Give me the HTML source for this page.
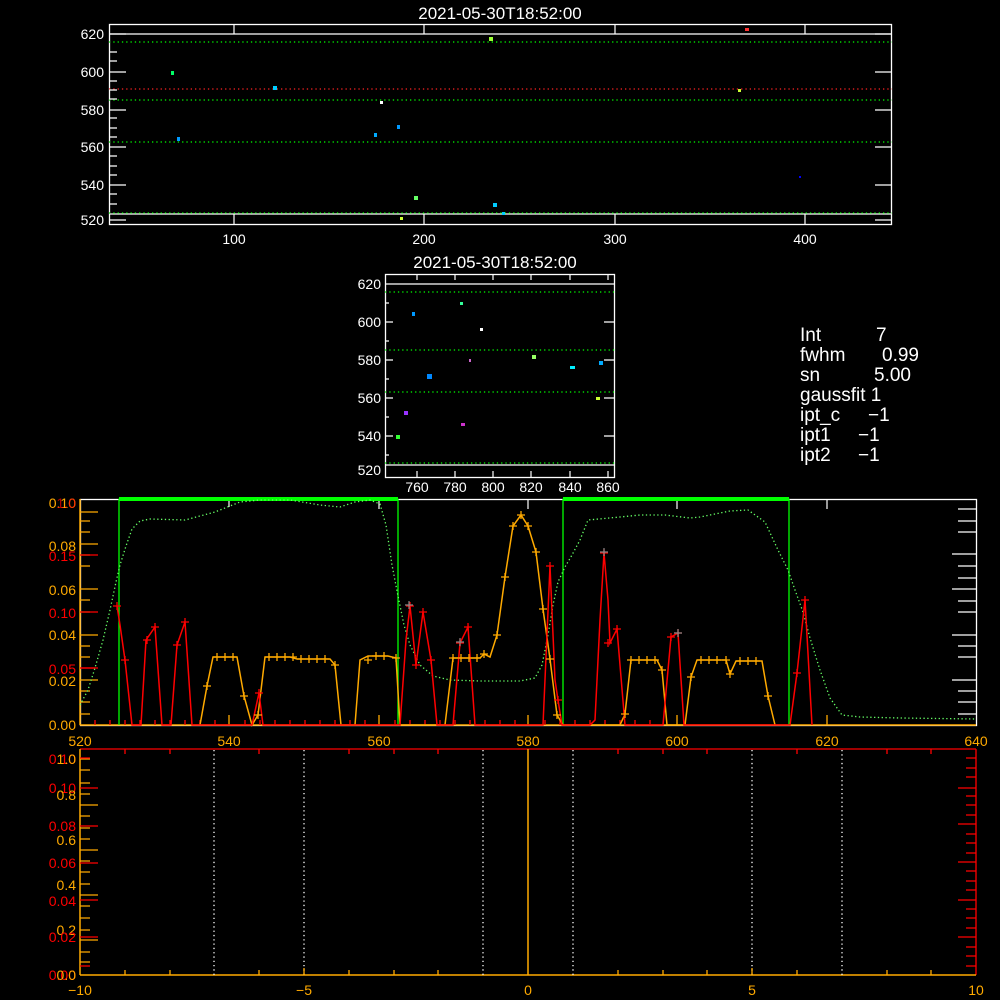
<!DOCTYPE html>
<html><head><meta charset="utf-8"><style>
html,body{margin:0;padding:0;background:#000;}
svg{display:block}
text{font-family:"Liberation Sans",sans-serif;}
</style></head><body>
<svg width="1000" height="1000" viewBox="0 0 1000 1000" xmlns="http://www.w3.org/2000/svg">
<rect width="1000" height="1000" fill="#000"/>

<!-- TOP PANEL -->
<text x="500" y="19" fill="#fff" font-size="17" text-anchor="middle">2021-05-30T18:52:00</text>
<rect x="109.5" y="24.5" width="782" height="200" fill="none" stroke="#fff" stroke-width="1.3"/>
<line x1="109" y1="34" x2="892" y2="34" stroke="#fff" stroke-width="1.3"/>
<line x1="109" y1="214" x2="892" y2="214" stroke="#fff" stroke-width="1.3"/>
<g stroke-dasharray="1.3 3" stroke-width="1.3">
<line x1="109" y1="42" x2="892" y2="42" stroke="#0f0"/>
<line x1="109" y1="89" x2="892" y2="89" stroke="#f22"/>
<line x1="109" y1="100" x2="892" y2="100" stroke="#0f0"/>
<line x1="109" y1="142" x2="892" y2="142" stroke="#0f0"/>
<line x1="109" y1="213" x2="892" y2="213" stroke="#0f0"/>
</g>
<g stroke="#fff" stroke-width="1.2">
<path d="M109 34h17M109 72h17M109 110h17M109 147h17M109 185h17M109 220h17M109 52h8M109 61h8M109 81h8M109 90h8M109 99h8M109 118h8M109 128h8M109 137h8M109 156h8M109 166h8M109 175h8M109 194h8M109 204h8M875 34h17M875 72h17M875 110h17M875 147h17M875 185h17M875 220h17"/>
<path d="M234 224v-10M424 224v-10M615 224v-10M805 224v-10M234 24v10M424 24v10M615 24v10M805 24v10"/>
</g>
<g fill="#fff" font-size="14" text-anchor="end">
<text x="104" y="39">620</text><text x="104" y="77">600</text><text x="104" y="115">580</text><text x="104" y="152">560</text><text x="104" y="190">540</text><text x="104" y="225">520</text>
</g>
<g fill="#fff" font-size="14" text-anchor="middle">
<text x="234" y="244">100</text><text x="424" y="244">200</text><text x="615" y="244">300</text><text x="805" y="244">400</text>
</g>
<g>
<rect x="171" y="71" width="3" height="4" fill="#0f6"/><rect x="177" y="137" width="3" height="4" fill="#09f"/>
<rect x="273" y="86" width="4" height="4" fill="#0cf"/><rect x="380" y="101" width="3" height="3" fill="#fff"/>
<rect x="397" y="125" width="3" height="4" fill="#09f"/><rect x="374" y="133" width="3" height="4" fill="#0af"/>
<rect x="414" y="196" width="4" height="4" fill="#6f6"/><rect x="400" y="217" width="3" height="3" fill="#cf3"/>
<rect x="493" y="203" width="4" height="4" fill="#0cf"/><rect x="489" y="37" width="4" height="4" fill="#9f3"/>
<rect x="745" y="28" width="4" height="3" fill="#f33"/><rect x="738" y="89" width="3" height="3" fill="#cf3"/>
<rect x="799" y="176" width="2" height="2" fill="#00f"/><rect x="502" y="212" width="3" height="3" fill="#0cf"/>
</g>

<!-- MIDDLE PANEL -->
<text x="495" y="268" fill="#fff" font-size="17" text-anchor="middle">2021-05-30T18:52:00</text>
<rect x="385.5" y="274.5" width="229" height="203" fill="none" stroke="#fff" stroke-width="1.3"/>
<line x1="385" y1="284" x2="615" y2="284" stroke="#fff" stroke-width="1.3"/>
<line x1="385" y1="465" x2="615" y2="465" stroke="#fff" stroke-width="1.3"/>
<g stroke="#0f0" stroke-dasharray="1.3 3" stroke-width="1.3">
<line x1="385" y1="292" x2="615" y2="292"/><line x1="385" y1="350" x2="615" y2="350"/><line x1="385" y1="392" x2="615" y2="392"/><line x1="385" y1="463" x2="615" y2="463"/>
</g>
<g stroke="#fff" stroke-width="1.2">
<path d="M385 322h8M385 360h8M385 398h8M385 436h8M385 303h4M385 341h4M385 379h4M385 417h4M385 455h4M604 322h11M604 360h11M604 398h11M604 436h11"/>
<path d="M417 477v-6M455 477v-6M493 477v-6M531 477v-6M570 477v-6M608 477v-6M417 274v6M455 274v6M493 274v6M531 274v6M570 274v6M608 274v6"/>
</g>
<g fill="#fff" font-size="14" text-anchor="end">
<text x="381" y="289">620</text><text x="381" y="327">600</text><text x="381" y="365">580</text><text x="381" y="403">560</text><text x="381" y="441">540</text><text x="381" y="475">520</text>
</g>
<g fill="#fff" font-size="14" text-anchor="middle">
<text x="417" y="492">760</text><text x="455" y="492">780</text><text x="493" y="492">800</text><text x="531" y="492">820</text><text x="570" y="492">840</text><text x="608" y="492">860</text>
</g>
<g>
<rect x="396" y="435" width="4" height="4" fill="#3f3"/><rect x="404" y="411" width="4" height="4" fill="#93f"/>
<rect x="412" y="312" width="3" height="4" fill="#09f"/><rect x="427" y="374" width="5" height="5" fill="#08f"/>
<rect x="460" y="302" width="3" height="3" fill="#3f9"/><rect x="461" y="423" width="4" height="3" fill="#c3c"/>
<rect x="480" y="328" width="3" height="3" fill="#fff"/><rect x="469" y="359" width="2" height="3" fill="#c6c"/>
<rect x="532" y="355" width="4" height="4" fill="#9f6"/><rect x="570" y="366" width="5" height="3" fill="#0ef"/>
<rect x="599" y="361" width="4" height="4" fill="#0af"/><rect x="596" y="397" width="4" height="3" fill="#cf3"/>
</g>

<!-- TEXT BOX -->
<g fill="#fff" font-size="19">
<text x="800" y="341">Int</text><text x="876" y="341">7</text>
<text x="800" y="361">fwhm</text><text x="882" y="361">0.99</text>
<text x="800" y="381">sn</text><text x="874" y="381">5.00</text>
<text x="800" y="401">gaussfit 1</text>
<text x="800" y="421">ipt_c</text><text x="868" y="421">−1</text>
<text x="800" y="441">ipt1</text><text x="858" y="441">−1</text>
<text x="800" y="461">ipt2</text><text x="858" y="461">−1</text>
</g>

<!-- SPECTRUM PANEL -->
<rect x="80.5" y="499.5" width="896" height="226" fill="none" stroke="#fff" stroke-width="1.3"/>
<line x1="80" y1="725" x2="976" y2="725" stroke="#fa0" stroke-width="1.5"/>
<line x1="80" y1="499" x2="80" y2="725" stroke="#fa0" stroke-width="1.5"/>
<g stroke="#fff" stroke-width="1.2">
<path d="M976 509h-18M976 521h-18M976 532h-18M976 554h-24M976 566h-18M976 578h-18M976 589h-24M976 601h-18M976 612h-18M976 635h-24M976 646h-18M976 657h-18M976 680h-24M976 691h-18M976 702h-18M976 714h-18"/>
<path d="M229 499v8M379 499v10M528 499v10M677 499v10M827 499v10"/>
</g>
<g stroke="#fa0" stroke-width="1.3">
<path d="M80 512h18M80 521h10M80 532h10M80 544h18M80 555h10M80 566h10M80 589h18M80 600h10M80 612h10M80 635h18M80 646h10M80 657h10M80 680h18M80 691h10M80 702h10M80 714h10"/>
<path d="M229 725v-10M379 725v-10M528 725v-10M677 725v-10M827 725v-10"/>
</g>
<g stroke="#f00" stroke-width="1.3"><path d="M80 555h18M80 612h18M80 668h18"/><path d="M95 725v-5M110 725v-5M125 725v-5M140 725v-5M155 725v-5M170 725v-5M185 725v-5M200 725v-5M215 725v-5M245 725v-5M260 725v-5M275 725v-5M290 725v-5M305 725v-5M320 725v-5M335 725v-5M350 725v-5M365 725v-5M395 725v-5M410 725v-5M425 725v-5M440 725v-5M455 725v-5M470 725v-5M485 725v-5M500 725v-5M515 725v-5M545 725v-5M560 725v-5M575 725v-5M590 725v-5M605 725v-5M620 725v-5M635 725v-5M650 725v-5"/></g>
<!-- y labels -->
<g font-size="14" text-anchor="end">
<text x="76" y="508" fill="#fa0">0.10</text><text x="76" y="508" fill="#f00" opacity="0.7">1.0</text>
<text x="76" y="551" fill="#fa0">0.08</text>
<text x="76" y="561" fill="#f00">0.15</text>
<text x="76" y="595" fill="#fa0">0.06</text>
<text x="76" y="618" fill="#f00">0.10</text>
<text x="76" y="640" fill="#fa0">0.04</text>
<text x="76" y="674" fill="#f00">0.05</text>
<text x="76" y="686" fill="#fa0">0.02</text>
<text x="76" y="730" fill="#fa0">0.00</text>
</g>
<g fill="#fa0" font-size="14" text-anchor="middle">
<text x="80" y="746">520</text><text x="229" y="746">540</text><text x="379" y="746">560</text><text x="528" y="746">580</text><text x="677" y="746">600</text><text x="827" y="746">620</text><text x="976" y="746">640</text>
</g>
<!-- green bands -->
<g stroke="#0f0">
<path d="M119 499h279M563 499h226" stroke-width="4"/>
<path d="M119 499v226M398 499v226M563 499v226M789 499v226" stroke-width="1.3"/>
</g>
<!-- transmission -->
<polyline fill="none" stroke="#6f6" stroke-width="1.3" stroke-dasharray="1.3 2.5" points="80,705 88,690 95,668 103,640 110,610 116,582 120,565 126,546 132,529 140,521 150,519 185,520 200,516 215,512 225,508 240,502 260,500 290,500 320,505 340,507 355,502 370,500 380,504 386,525 392,565 398,596 404,625 410,645 420,665 433,676 450,680 480,681 520,681 535,678 542,665 548,635 553,605 558,582 565,567 572,555 580,540 588,520 620,517 640,515 665,515 690,518 700,517 715,514 730,511 748,510 765,522 778,550 788,570 795,590 803,612 810,638 820,670 830,698 842,715 860,717 900,718 976,719"/>
<!-- orange -->
<polyline fill="none" stroke="#fa0" stroke-width="1.5" points="200,725 207,686 213,657 237,657 244,696 252,725 258,715 265,657 290,657 297,659 330,659 335,665 341,725 355,725 360,660 368,656 388,656 396,658 400,725 445,725 453,658 480,658 484,654 490,657 497,635 505,577 513,526 521,515 528,526 536,552 543,609 550,659 557,715 563,725 620,725 625,714 631,660 657,660 662,670 667,725 685,725 691,677 697,660 726,660 730,674 736,661 762,661 768,696 775,725"/>
<!-- red -->
<polyline fill="none" stroke="#f00" stroke-width="1.5" points="117,606 120,625 125,660 132,725 141,725 146,640 155,627 162,725 171,725 177,645 185,622 192,725 252,725 259,693 263,725 400,725 406,640 410,606 416,665 423,612 431,660 437,725 453,725 460,643 468,627 475,725 543,725 550,566 555,680 558,700 562,725 590,725 595,720 600,620 604,553 608,600 610,643 617,629 625,725 663,725 671,637 678,633 684,725 790,725 797,673 805,600 812,725"/>
<polyline fill="none" stroke="#f00" stroke-width="1.3" points="80,668 88,668 95,668"/>
<!-- crosses -->
<g stroke="#f00" stroke-width="1.3" fill="none">
<path d="M113 606h8M117 602v8M121 660h8M125 656v8M143 640h8M147 636v8M151 627h8M155 623v8M173 645h8M177 641v8M181 622h8M185 618v8M255 693h8M259 689v8M406 606h8M410 602v8M412 665h8M416 661v8M419 612h8M423 608v8M427 660h8M431 656v8M456 643h8M460 639v8M464 627h8M468 623v8M546 566h8M550 562v8M554 700h8M558 696v8M600 553h8M604 549v8M604 643h8M608 639v8M613 629h8M617 625v8M667 637h8M671 633v8M674 633h8M678 629v8M793 673h8M797 669v8M801 600h8M805 596v8"/>
</g>
<g stroke="#fa0" stroke-width="1.3" fill="none">
<path d="M203 686h8M207 682v8M213 657h8M217 653v8M221 657h8M225 653v8M229 657h8M233 653v8M240 696h8M244 692v8M254 715h8M258 711v8M265 657h8M269 653v8M273 657h8M277 653v8M281 657h8M285 653v8M289 657h8M293 653v8M297 659h8M301 655v8M305 659h8M309 655v8M313 659h8M317 655v8M321 659h8M325 655v8M331 665h8M335 661v8M364 660h8M368 656v8M372 656h8M376 652v8M380 656h8M384 652v8M392 658h8M396 654v8M449 658h8M453 654v8M457 658h8M461 654v8M465 658h8M469 654v8M473 658h8M477 654v8M480 654h8M484 650v8M493 635h8M497 631v8M501 577h8M505 573v8M509 526h8M513 522v8M517 515h8M521 511v8M524 526h8M528 522v8M532 552h8M536 548v8M539 609h8M543 605v8M546 659h8M550 655v8M553 715h8M557 711v8M621 714h8M625 710v8M627 660h8M631 656v8M635 660h8M639 656v8M643 660h8M647 656v8M651 660h8M655 656v8M658 670h8M662 666v8M687 677h8M691 673v8M697 660h8M701 656v8M705 660h8M709 656v8M713 660h8M717 656v8M722 660h8M726 656v8M726 674h8M730 670v8M736 661h8M740 657v8M744 661h8M748 657v8M752 661h8M756 657v8M764 696h8M768 692v8"/>
</g>
<g stroke="#888" stroke-width="1.2"><path d="M405 605h8M409 601v8M600 552h8M604 548v8M456 642h8M460 638v8M674 633h8M678 629v8"/></g>

<!-- BOTTOM PANEL -->
<line x1="80" y1="749" x2="976" y2="749" stroke="#f00" stroke-width="1.3"/>
<line x1="976" y1="749" x2="976" y2="975" stroke="#f00" stroke-width="1.3"/>
<line x1="80" y1="975" x2="976" y2="975" stroke="#fa0" stroke-width="1.5"/>
<line x1="80" y1="749" x2="80" y2="975" stroke="#fa0" stroke-width="1.5"/>
<g stroke="#fff" stroke-width="1.3" stroke-dasharray="1.3 3">
<path d="M214 750v225M304 750v225M483 750v225M573 750v225M752 750v225M842 750v225"/>
</g>
<line x1="528" y1="749" x2="528" y2="975" stroke="#fa0" stroke-width="1.5"/>
<g stroke="#fa0" stroke-width="1.3">
<path d="M80 759h10M80 770h10M80 783h10M80 794h10M80 805h18M80 816h10M80 828h10M80 839h10M80 850h18M80 861h10M80 872h10M80 884h10M80 895h18M80 906h10M80 918h10M80 930h10M80 940h18M80 952h10M80 962h10"/>
<path d="M125 975v-5M170 975v-5M259 975v-5M349 975v-5M394 975v-5M438 975v-5M618 975v-5M663 975v-5M707 975v-5M797 975v-5M887 975v-5M931 975v-5M304 975v-7M752 975v-7"/>
</g>
<g stroke="#f00" stroke-width="1.3">
<path d="M80 758h10M80 788h18M80 826h18M80 863h18M80 900h18M80 937h18M80 966h10M976 758h-10M976 768h-10M976 777h-10M976 788h-18M976 796h-10M976 805h-10M976 815h-10M976 824h-18M976 834h-10M976 843h-10M976 853h-10M976 862h-18M976 871h-10M976 881h-10M976 890h-10M976 900h-18M976 909h-10M976 918h-10M976 928h-10M976 937h-18M976 947h-10M976 956h-10M976 966h-10"/>
<path d="M125 749v5M170 749v5M259 749v5M349 749v5M394 749v5M438 749v5M618 749v5M663 749v5M707 749v5M797 749v5M887 749v5M931 749v5"/>
</g>
<g font-size="14" text-anchor="end">
<text x="76" y="764" fill="#f00">0.10</text><text x="76" y="764" fill="#fa0">1.0</text>
<text x="76" y="793" fill="#f00">0.10</text><text x="76" y="800" fill="#fa0">0.8</text>
<text x="76" y="831" fill="#f00">0.08</text><text x="76" y="845" fill="#fa0">0.6</text>
<text x="76" y="868" fill="#f00">0.06</text><text x="76" y="890" fill="#fa0">0.4</text>
<text x="76" y="906" fill="#f00">0.04</text><text x="76" y="935" fill="#fa0">0.2</text>
<text x="76" y="942" fill="#f00">0.02</text>
<text x="76" y="980" fill="#f00">0.00</text><text x="76" y="980" fill="#fa0">0.0</text>
</g>
<g fill="#fa0" font-size="14" text-anchor="middle">
<text x="80" y="995">−10</text><text x="304" y="995">−5</text><text x="528" y="995">0</text><text x="752" y="995">5</text><text x="976" y="995">10</text>
</g>
</svg>
</body></html>
